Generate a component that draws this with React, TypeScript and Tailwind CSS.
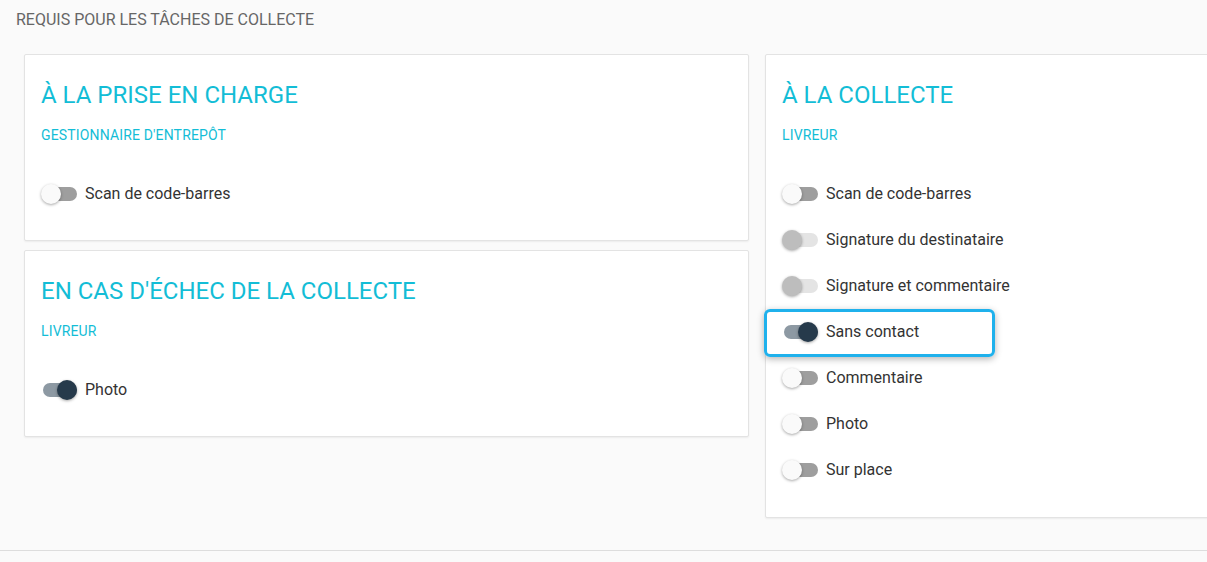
import React from "react";

type State = "off" | "on" | "disabled";

function Toggle({ state }: { state: State }) {
  const track =
    state === "on" ? "bg-[#8d99a3]" : state === "disabled" ? "bg-[#e4e4e4]" : "bg-[#9e9e9e]";
  const thumb =
    state === "on"
      ? "left-[16px] bg-[#263a4b]"
      : state === "disabled"
      ? "left-0 bg-[#bdbdbd]"
      : "left-0 bg-[#fafafa]";
  return (
    <div className="relative w-[36px] h-5 shrink-0">
      <div className={`absolute left-[2px] top-[3px] w-[34px] h-[14px] rounded-full ${track}`} />
      <div
        className={`absolute top-0 w-5 h-5 rounded-full shadow-[0_1px_3px_rgba(0,0,0,0.35)] ${thumb}`}
      />
    </div>
  );
}

function Row({ label, state, highlight }: { label: string; state: State; highlight?: boolean }) {
  return (
    <div className="relative flex items-center h-[46px] gap-2">
      {highlight && (
        <div className="absolute -left-[18px] top-0 w-[231px] h-[48px] rounded-[6px] border-[3px] border-[#1fb1ec] shadow-[0_2px_7px_rgba(0,0,0,0.3)]" />
      )}
      <Toggle state={state} />
      <span className="text-[16px] text-[#333333] leading-5">{label}</span>
    </div>
  );
}

function Card({
  title,
  subtitle,
  rows,
  className,
}: {
  title: string;
  subtitle: string;
  rows: { label: string; state: State; highlight?: boolean }[];
  className?: string;
}) {
  return (
    <div
      className={`bg-white border border-[#e3e3e3] rounded-[2px] shadow-[0_1px_2px_rgba(0,0,0,0.06)] pl-[16px] pt-[24px] pb-[23px] ${className ?? ""}`}
    >
      <div className="text-[24px] leading-8 text-[#13bdd6]">{title}</div>
      <div className="mt-[15px] text-[14px] leading-[18px] tracking-[0.15px] text-[#13bdd6]">{subtitle}</div>
      <div className="mt-[27px] flex flex-col">
        {rows.map((r) => (
          <Row key={r.label} {...r} />
        ))}
      </div>
    </div>
  );
}

export default function App() {
  return (
    <div
      className="w-[1207px] h-[562px] overflow-hidden bg-[#fafafa]"
      style={{ fontFamily: "Roboto, 'Liberation Sans', sans-serif" }}
    >
      <div className="pl-4 pt-[10px] h-[54px]">
        <div className="text-[16px] leading-5 text-[#666666]">REQUIS POUR LES TÂCHES DE COLLECTE</div>
      </div>
      <div className="flex gap-4 pl-6 h-[496px]">
        <div className="w-[725px] shrink-0 flex flex-col gap-[9px]">
          <Card
            title="À LA PRISE EN CHARGE"
            subtitle="GESTIONNAIRE D'ENTREPÔT"
            rows={[{ label: "Scan de code-barres", state: "off" }]}
          />
          <Card
            title="EN CAS D'ÉCHEC DE LA COLLECTE"
            subtitle="LIVREUR"
            rows={[{ label: "Photo", state: "on" }]}
          />
        </div>
        <div className="w-[470px] shrink-0 self-start">
          <Card
            title="À LA COLLECTE"
            subtitle="LIVREUR"
            className="pb-[24px]"
            rows={[
              { label: "Scan de code-barres", state: "off" },
              { label: "Signature du destinataire", state: "disabled" },
              { label: "Signature et commentaire", state: "disabled" },
              { label: "Sans contact", state: "on", highlight: true },
              { label: "Commentaire", state: "off" },
              { label: "Photo", state: "off" },
              { label: "Sur place", state: "off" },
            ]}
          />
        </div>
      </div>
      <div className="border-t border-[#dddddd]" />
    </div>
  );
}
